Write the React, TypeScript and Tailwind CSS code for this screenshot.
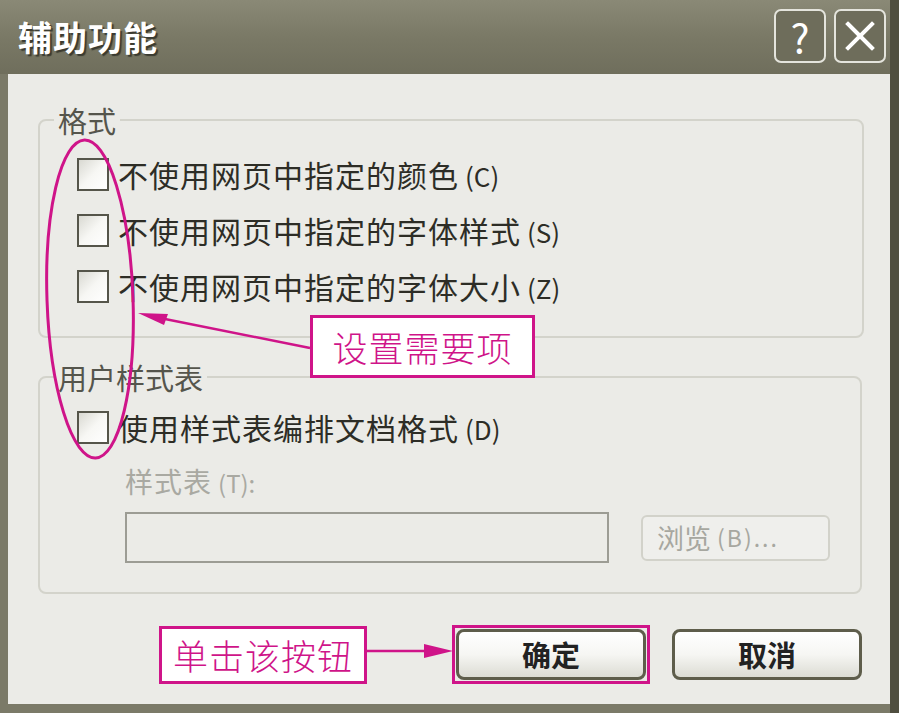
import React from "react";

const ui = { fontFamily: '"Noto Sans CJK SC", "Noto Sans", sans-serif' };
const MAGENTA = "#cf1489";

const Checkbox = () => (
  <span className="block h-[33px] w-[32px] shrink-0 border-2 border-[#55554a] bg-gradient-to-br from-[#d9d9d2] via-[#f7f7f4] to-white" />
);

const CheckRow = ({ label, hot }: { label: string; hot: string }) => (
  <div className="flex h-[56px] items-center">
    <Checkbox />
    <span className="ml-[9px] text-[30px] leading-none tracking-[1px] text-[#2d2d26]">
      {label}
      <span className="ml-[6px] text-[26px] tracking-normal">({hot})</span>
    </span>
  </div>
);

const XpButton = ({ label }: { label: string }) => (
  <button className="flex h-[51px] w-[190px] items-center justify-center rounded-[8px] border-[3px] border-[#5e5d4b] bg-gradient-to-b from-white via-[#f6f6f3] to-[#dcdcd4] text-[29px] font-bold leading-none text-[#222]">
    {label}
  </button>
);

const Overlay = () => (
  <svg
    className="pointer-events-none absolute left-0 top-0"
    width={899}
    height={713}
    viewBox="0 0 899 713"
  >
    <ellipse cx={90} cy={299} rx={43} ry={159} fill="none" stroke={MAGENTA} strokeWidth={3} transform="rotate(-2 90 299)" />
    <line x1={310} y1={348} x2={150} y2={316} stroke={MAGENTA} strokeWidth={2.5} />
    <polygon points="138,313 168,314 164,325" fill={MAGENTA} />
    <line x1={367} y1={651} x2={430} y2={651} stroke={MAGENTA} strokeWidth={2.5} />
    <polygon points="453,651 424,644 424,658" fill={MAGENTA} />
  </svg>
);

export default function App() {
  return (
    <div className="relative h-[713px] w-[899px] overflow-hidden bg-[#4f4e3f]" style={ui}>
      <div className="flex h-full w-[890px] flex-col rounded-t-[14px] bg-[#7b7a68]">
        {/* title bar */}
        <div className="flex h-[74px] items-center justify-between bg-gradient-to-b from-[#8a8976] via-[#7a7966] to-[#6f6e5c] pl-[18px] pr-[4px]">
          <span className="text-[34px] font-bold leading-none tracking-[1px] text-white [text-shadow:2px_2px_1px_#3a3a30]">
            辅助功能
          </span>
          <div className="flex gap-[8px] pb-[2px]">
            <span className="flex h-[54px] w-[52px] items-center justify-center rounded-[7px] border-2 border-[#e4e4dc] bg-[#6e6d5b] text-[40px] leading-none text-white">
              ?
            </span>
            <span className="flex h-[54px] w-[52px] items-center justify-center rounded-[7px] border-2 border-[#e4e4dc] bg-[#6e6d5b]">
              <svg width="34" height="34" viewBox="0 0 34 34">
                <path d="M5 5 L29 29 M29 5 L5 29" stroke="white" strokeWidth="4" strokeLinecap="square" />
              </svg>
            </span>
          </div>
        </div>

        {/* body */}
        <div className="mb-[9px] ml-[8px] flex-1 bg-[#ebebe7] pl-[30px] pt-[28px]">
          <fieldset className="w-[826px] rounded-[8px] border-2 border-[#d3d3cb] pb-[22px] pl-[37px] pt-[8px]">
            <legend className="-ml-[23px] px-[4px] text-[29px] leading-[36px] text-[#55554c]">格式</legend>
            <CheckRow label="不使用网页中指定的颜色" hot="C" />
            <CheckRow label="不使用网页中指定的字体样式" hot="S" />
            <CheckRow label="不使用网页中指定的字体大小" hot="Z" />
          </fieldset>

          <fieldset className="mt-[21px] w-[824px] rounded-[8px] border-2 border-[#d3d3cb] pb-[29px] pl-[37px] pt-[4px]">
            <legend className="-ml-[23px] px-[4px] text-[29px] leading-[36px] text-[#55554c]">用户样式表</legend>
            <CheckRow label="使用样式表编排文档格式" hot="D" />
            <div className="ml-[48px] mt-[6px] text-[28px] leading-[40px] tracking-[1px] text-[#a9a9a2]">
              样式表<span className="ml-[6px] text-[24px] tracking-normal">(T):</span>
            </div>
            <div className="ml-[48px] mt-[9px] flex items-center">
              <div className="h-[51px] w-[484px] border-2 border-[#9c9c94] bg-[#ebebe7]" />
              <div className="ml-[32px] flex h-[46px] w-[189px] items-center rounded-[6px] border-2 border-[#d2d2ca] bg-[#efefec] pl-[14px] text-[27px] leading-none text-[#a7a7a0]">
                浏览<span className="ml-[6px] text-[23px] tracking-[2px]">(B)...</span>
              </div>
            </div>
          </fieldset>

          <div className="mt-[31px] flex items-center">
            <div className="ml-[121px] flex h-[58px] w-[208px] items-center justify-center border-[3px] border-[#cf1489] bg-white text-[35px] font-light leading-none tracking-[1px] text-[#cf1489]">
              单击该按钮
            </div>
            <div className="ml-[85px] border-[3px] border-[#cf1489] p-[1px]">
              <XpButton label="确定" />
            </div>
            <div className="ml-[22px]">
              <XpButton label="取消" />
            </div>
          </div>
        </div>
      </div>

      {/* annotation callout */}
      <div className="absolute left-[310px] top-[315px] flex h-[63px] w-[225px] items-center justify-center border-[3px] border-[#cf1489] bg-white text-[35px] font-light leading-none tracking-[1px] text-[#cf1489]">
        设置需要项
      </div>
      <Overlay />
    </div>
  );
}
